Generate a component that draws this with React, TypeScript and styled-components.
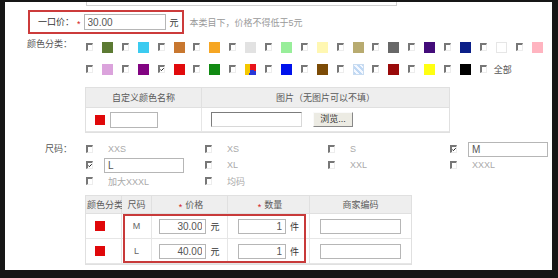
import React from 'react';
import styled, { createGlobalStyle } from 'styled-components';

const GlobalStyle = createGlobalStyle`
  html, body { margin: 0; padding: 0; background: #fff; }
  body {
    font-family: "Liberation Sans", "Noto Sans CJK SC", sans-serif;
    font-size: 9px;
    color: #444;
  }
`;

// --- Styled Components ---
const Frame = styled.div`
  width: 558px;
  height: 278px;
  box-sizing: border-box;
  border-style: solid;
  border-color: #161616;
  border-width: 2px 6px 8px 5px;
  background: #fff;
  overflow: hidden;
  display: flex;
  flex-direction: column;
`;

const TopStub = styled.div`
  margin-left: 81px;
  width: 311px;
  height: 4px;
  box-sizing: border-box;
  border: 1px solid #d0d0d0;
  border-top: none;
`;

const PriceRow = styled.div`
  display: flex;
  align-items: center;
  height: 24px;
  margin-top: 4px;
`;

const PriceBox = styled.div`
  margin-left: 23px;
  height: 24px;
  box-sizing: border-box;
  border: 2px solid #cc3b3b;
  padding: 0 3px 0 8px;
  display: flex;
  align-items: center;
`;

const FieldLabel = styled.span`
  color: #333;
  white-space: nowrap;
  line-height: 16px;
`;

const Required = styled.span`
  position: relative;
  top: 2px;
  color: #d42020;
  margin: 0 3px;
  font-size: 9px;
`;

const TextBox = styled.input<{ $w: number; $h?: number; $right?: boolean }>`
  box-sizing: border-box;
  width: ${p => p.$w}px;
  height: ${p => p.$h ?? 16}px;
  margin: 0;
  padding: 0 3px;
  border: 1px solid #b6b6b6;
  background: #fff;
  font: 10px "Liberation Sans", sans-serif;
  color: #555;
  text-align: ${p => (p.$right ? 'right' : 'left')};
  outline: none;
  flex-shrink: 0;
`;

const Unit = styled.span`
  margin-left: 4px;
  color: #333;
  white-space: nowrap;
`;

const Hint = styled.span`
  margin-left: 6px;
  color: #999;
  white-space: nowrap;
`;

const Section = styled.div<{ $top: number }>`
  display: flex;
  margin-top: ${p => p.$top}px;
`;

const SideLabel = styled.div`
  width: 67px;
  flex-shrink: 0;
  text-align: right;
  line-height: 16px;
  color: #555;
  white-space: nowrap;
`;

const ColorGrid = styled.div`
  margin-left: 14px;
  display: grid;
  grid-template-columns: repeat(13, 35.8px);
  grid-auto-rows: 22px;
  align-items: center;
`;

const Item = styled.div`
  display: flex;
  align-items: center;
`;

const Box = styled.span`
  display: inline-flex;
  align-items: center;
  justify-content: center;
  box-sizing: border-box;
  width: 7px;
  height: 8px;
  flex-shrink: 0;
  border-top: 2px solid #777;
  border-left: 2px solid #777;
  border-right: 1px solid #ededed;
  border-bottom: 1px solid #ededed;
  background: #fff;
  overflow: visible;
`;

const Swatch = styled.span<{ $bg: string; $edge?: string }>`
  display: inline-block;
  box-sizing: border-box;
  width: 11px;
  height: 11px;
  margin-left: 9px;
  flex-shrink: 0;
  background: ${p => p.$bg};
  border: ${p => (p.$edge ? `1px solid ${p.$edge}` : 'none')};
`;

const AllLabel = styled.span`
  margin-left: 7px;
  color: #555;
`;

const CustomTable = styled.div`
  margin: 7px 0 0 80px;
  width: 365px;
  box-sizing: border-box;
  border: 1px solid #e0e0e0;
  display: grid;
  grid-template-columns: 116px 247px;
`;

const HeadCell = styled.div<{ $h: number; $last?: boolean; $start?: boolean }>`
  height: ${p => p.$h}px;
  box-sizing: border-box;
  background: #eeeeee;
  border-bottom: 1px solid #e0e0e0;
  border-right: ${p => (p.$last ? 'none' : '1px solid #e0e0e0')};
  display: flex;
  align-items: center;
  justify-content: ${p => (p.$start ? 'flex-start' : 'center')};
  padding-left: ${p => (p.$start ? 1 : 0)}px;
  color: #5a5a5a;
  white-space: nowrap;
`;

const BodyCell = styled.div<{ $h: number; $pad?: number; $center?: boolean; $last?: boolean }>`
  height: ${p => p.$h}px;
  box-sizing: border-box;
  border-bottom: 1px solid #e6e6e6;
  border-right: ${p => (p.$last ? 'none' : '1px solid #e6e6e6')};
  display: flex;
  align-items: center;
  justify-content: ${p => (p.$center ? 'center' : 'flex-start')};
  padding-left: ${p => p.$pad ?? 0}px;
  color: #666;
`;

const RedChip = styled.span`
  display: inline-block;
  width: 10px;
  height: 10px;
  background: #e0080a;
  flex-shrink: 0;
`;

const ChipInput = styled.span`
  margin-left: 5px;
  display: flex;
`;

const FileBox = styled.div`
  width: 91px;
  height: 15px;
  box-sizing: border-box;
  border: 1px solid;
  border-color: #7c7c7c #d8d8d8 #d8d8d8 #7c7c7c;
  background: #fff;
`;

const BrowseButton = styled.div`
  margin-left: 11px;
  width: 40px;
  height: 15px;
  box-sizing: border-box;
  border: 1px solid;
  border-color: #fafafa #888 #888 #fafafa;
  background: #ecebe3;
  color: #333;
  display: flex;
  align-items: center;
  justify-content: center;
  line-height: 1;
`;

const SizeGrid = styled.div`
  margin-left: 14px;
  display: grid;
  grid-template-columns: 119px 123px 122px 100px;
  grid-auto-rows: 16px;
  align-items: center;
`;

const SizeText = styled.span`
  margin-left: 15px;
  color: #aaa;
  white-space: nowrap;
`;

const SizeInputWrap = styled.span`
  margin-left: 11px;
  display: flex;
`;

const OrderWrap = styled.div`
  position: relative;
  margin: 6px 0 0 80px;
  width: 327px;
`;

const OrderTable = styled.div`
  box-sizing: border-box;
  border: 1px solid #e0e0e0;
  display: grid;
  grid-template-columns: 36px 30px 76px 82px 101px;
`;

const Mark = styled.div`
  position: absolute;
  left: 38px;
  top: 19px;
  width: 183px;
  height: 49px;
  box-sizing: border-box;
  border: 2px solid #c83a3a;
  pointer-events: none;
`;

// --- Data ---
type ColorSpec = { bg: string; edge?: string; checked?: boolean };

const colorRowOne: ColorSpec[] = [
  { bg: '#5c7a33' },
  { bg: '#3ccbf0' },
  { bg: '#c8772f' },
  { bg: '#f6a623' },
  { bg: '#e2e2e2' },
  { bg: '#98ee9a' },
  { bg: '#fff7b2' },
  { bg: '#b8ab70' },
  { bg: '#686868' },
  { bg: '#430c7a' },
  { bg: '#0b1f88' },
  { bg: '#ffffff', edge: '#e6e6e6' },
  { bg: '#ffb4c0' },
];

const colorRowTwo: ColorSpec[] = [
  { bg: '#dba3dc' },
  { bg: '#820482' },
  { bg: '#e10a0c', checked: true },
  { bg: '#118a13' },
  { bg: 'conic-gradient(#e8141c 0 30%, #2838d8 30% 55%, #f5c800 55% 100%)' },
  { bg: '#0012ec' },
  { bg: '#7c4b06' },
  { bg: 'repeating-linear-gradient(45deg, #bfd8f4 0 2px, #f4f8ff 2px 4px)', edge: '#c9dcf0' },
  { bg: '#9a0a0a' },
  { bg: '#ffff12' },
  { bg: '#000000' },
];

type SizeSpec = { name: string; checked?: boolean };

const sizes: SizeSpec[] = [
  { name: 'XXS' },
  { name: 'XS' },
  { name: 'S' },
  { name: 'M', checked: true },
  { name: 'L', checked: true },
  { name: 'XL' },
  { name: 'XXL' },
  { name: 'XXXL' },
  { name: '加大XXXL' },
  { name: '均码' },
];

const orders = [
  { size: 'M', price: '30.00', qty: '1' },
  { size: 'L', price: '40.00', qty: '1' },
];

// --- Component ---
const CheckBox: React.FC<{ checked?: boolean }> = ({ checked }) => (
  <Box>
    {checked && (
      <svg width="6" height="5" viewBox="0 0 6 5" style={{ display: 'block' }}>
        <path d="M0.4 2.4 L2.1 4.2 L5.6 0.6" fill="none" stroke="#111" strokeWidth="1.4" />
      </svg>
    )}
  </Box>
);

const App: React.FC = () => {
  return (
    <>
      <GlobalStyle />
      <Frame>
        <TopStub />

        <PriceRow>
          <PriceBox>
            <FieldLabel>一口价：</FieldLabel>
            <Required>*</Required>
            <TextBox $w={82} readOnly defaultValue="30.00" />
            <Unit>元</Unit>
          </PriceBox>
          <Hint>本类目下，价格不得低于5元</Hint>
        </PriceRow>

        <Section $top={2}>
          <SideLabel>颜色分类：</SideLabel>
          <ColorGrid>
            {colorRowOne.map((c, i) => (
              <Item key={`a${i}`}>
                <CheckBox checked={c.checked} />
                <Swatch $bg={c.bg} $edge={c.edge} />
              </Item>
            ))}
            {colorRowTwo.map((c, i) => (
              <Item key={`b${i}`}>
                <CheckBox checked={c.checked} />
                <Swatch $bg={c.bg} $edge={c.edge} />
              </Item>
            ))}
            <Item>
              <CheckBox />
              <AllLabel>全部</AllLabel>
            </Item>
          </ColorGrid>
        </Section>

        <CustomTable>
          <HeadCell $h={20}>自定义颜色名称</HeadCell>
          <HeadCell $h={20} $last>图片（无图片可以不填）</HeadCell>
          <BodyCell $h={24} $pad={9}>
            <RedChip />
            <ChipInput>
              <TextBox $w={48} readOnly defaultValue="" />
            </ChipInput>
          </BodyCell>
          <BodyCell $h={24} $pad={9} $last>
            <FileBox />
            <BrowseButton>浏览...</BrowseButton>
          </BodyCell>
        </CustomTable>

        <Section $top={8}>
          <SideLabel>尺码：</SideLabel>
          <SizeGrid>
            {sizes.map(s => (
              <Item key={s.name}>
                <CheckBox checked={s.checked} />
                {s.checked ? (
                  <SizeInputWrap>
                    <TextBox $w={80} $h={15} readOnly defaultValue={s.name} />
                  </SizeInputWrap>
                ) : (
                  <SizeText>{s.name}</SizeText>
                )}
              </Item>
            ))}
          </SizeGrid>
        </Section>

        <OrderWrap>
          <OrderTable>
            <HeadCell $h={18} $start>颜色分类</HeadCell>
            <HeadCell $h={18}>尺码</HeadCell>
            <HeadCell $h={18}><Required>*</Required>价格</HeadCell>
            <HeadCell $h={18}><Required>*</Required>数量</HeadCell>
            <HeadCell $h={18} $last>商家编码</HeadCell>
            {orders.map(o => (
              <React.Fragment key={o.size}>
                <BodyCell $h={25} $pad={9}>
                  <RedChip />
                </BodyCell>
                <BodyCell $h={25} $center>{o.size}</BodyCell>
                <BodyCell $h={25} $center>
                  <TextBox $w={47} $h={15} $right readOnly defaultValue={o.price} />
                  <Unit>元</Unit>
                </BodyCell>
                <BodyCell $h={25} $center>
                  <TextBox $w={48} $h={15} $right readOnly defaultValue={o.qty} />
                  <Unit>件</Unit>
                </BodyCell>
                <BodyCell $h={25} $center $last>
                  <TextBox $w={81} $h={15} readOnly defaultValue="" />
                </BodyCell>
              </React.Fragment>
            ))}
          </OrderTable>
          <Mark />
        </OrderWrap>
      </Frame>
    </>
  );
};

export default App;
